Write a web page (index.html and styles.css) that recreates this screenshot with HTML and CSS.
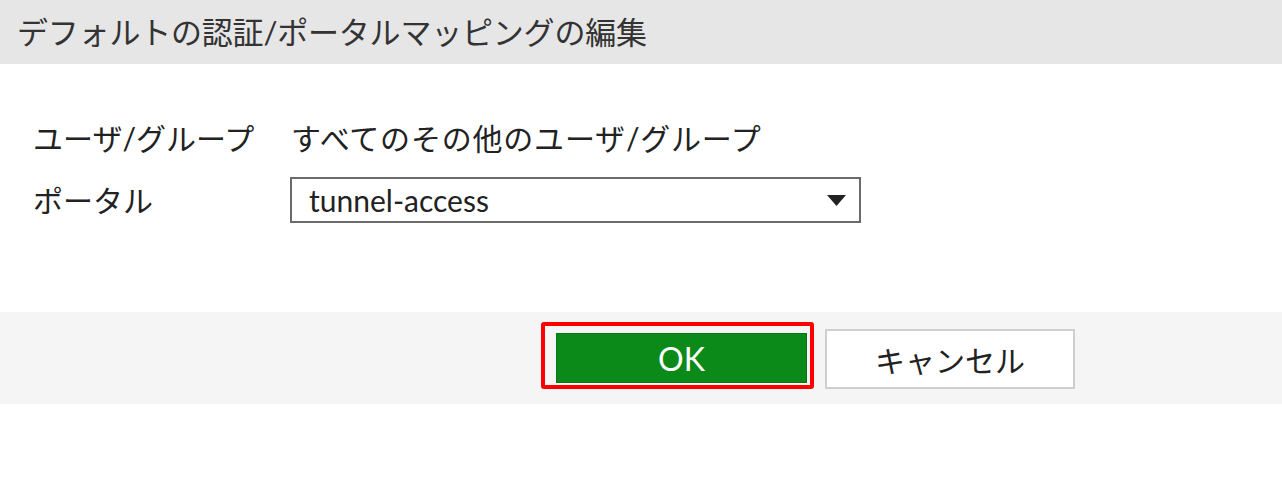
FILE: index.html
```html
<!DOCTYPE html>
<html lang="ja">
<head>
<meta charset="utf-8">
<title>デフォルトの認証/ポータルマッピングの編集</title>
<link rel="stylesheet" href="styles.css">
</head>
<body>
<div class="dialog">
  <div class="header">デフォルトの認証/ポータルマッピングの編集</div>
  <div class="content">
    <div class="form">
      <div class="label row1">ユーザ/グループ</div>
      <div class="value row1">すべてのその他のユーザ/グループ</div>
      <div class="label row2">ポータル</div>
      <div class="select">
        <span class="select-text">tunnel-access</span>
        <svg class="arrow" width="19" height="11" viewBox="0 0 19 11"><path d="M0 0H19L9.5 11Z" fill="#222"/></svg>
      </div>
    </div>
  </div>
  <div class="footer">
    <button class="btn btn-ok">OK</button>
    <button class="btn btn-cancel">キャンセル</button>
    <div class="highlight"></div>
  </div>
</div>
</body>
</html>
```
FILE: styles.css
```css
* { box-sizing: border-box; }
html, body { margin: 0; padding: 0; background: #fff; }
body {
  font-family: Lato, "Noto Sans CJK JP", sans-serif;
  color: #222;
  width: 1282px;
  height: 502px;
  overflow: hidden;
}
.header {
  height: 64px;
  background: #e6e6e6;
  padding-left: 17px;
  font-size: 31px;
  letter-spacing: -0.2px;
  line-height: 64px;
  color: #333;
  white-space: nowrap;
}
.content {
  height: 248px;
  padding: 56px 0 0 33px;
}
.form {
  display: grid;
  grid-template-columns: 258px 570px;
  grid-template-rows: 36px 46px;
  row-gap: 21px;
  align-items: center;
}
.label, .value {
  font-size: 30px;
  line-height: 36px;
  white-space: nowrap;
}
.value { letter-spacing: 0.8px; }
.select {
  height: 46px;
  border: 2px solid #6a6a6a;
  display: flex;
  align-items: center;
  justify-content: space-between;
  padding: 0 13px 0 17px;
  margin-left: -1px;
}
.select-text {
  font-size: 30px;
  line-height: 1;
  color: #222;
}
.arrow { display: block; margin-top: 1px; }
.footer {
  position: relative;
  height: 92px;
  background: #f5f5f5;
  display: flex;
  align-items: flex-start;
  padding-left: 556px;
}
.btn {
  font-family: Lato, "Noto Sans CJK JP", sans-serif;
  padding: 0;
  cursor: pointer;
}
.btn-ok {
  width: 251px;
  height: 50px;
  margin-top: 21px;
  background: #0b8a1a;
  border: 1px solid #0a7417;
  color: #fff;
  font-size: 32px;
}
.btn-cancel {
  width: 250px;
  height: 60px;
  margin-top: 17px;
  margin-left: 18px;
  background: #fff;
  border: 2px solid #cfcfcf;
  color: #222;
  font-size: 30px;
}
.highlight {
  position: absolute;
  left: 541px;
  top: 10px;
  width: 273px;
  height: 67px;
  border: 4px solid #ff0000;
  border-radius: 3px;
  pointer-events: none;
}
```
